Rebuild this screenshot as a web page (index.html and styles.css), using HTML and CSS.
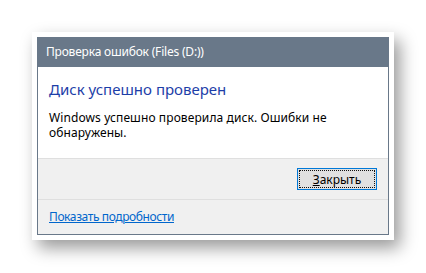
FILE: index.html
```html
<!DOCTYPE html>
<html lang="ru">

<head>
    <meta charset="UTF-8">
    <meta name="viewport" content="width=device-width, initial-scale=1.0">
    <title>Проверка ошибок</title>
    <link rel="stylesheet" href="styles.css">
</head>

<body>
    <div class="frame">
        <div class="dialog">
            <div class="title-bar">Проверка ошибок (Files (D:))</div>

            <div class="content">
                <h1>Диск успешно проверен</h1>
                <p>Windows успешно проверила диск. Ошибки не обнаружены.</p>
            </div>

            <div class="button-row">
                <button class="close-button"><span class="focus"><u>З</u>акрыть</span></button>
            </div>

            <div class="footer">
                <a href="#">Показать подробности</a>
            </div>
        </div>
    </div>
</body>

</html>
```

FILE: styles.css
```css
body {
    margin: 0;
    padding: 32px;
    background: white;
    font-family: 'Noto Sans', 'Open Sans', sans-serif;
    font-size: 12px;
}

.frame {
    width: 352px;
    padding: 5px;
    background: white;
    box-shadow: 6px 8px 16px rgba(0, 0, 0, 0.4);
}

.dialog {
    border: 1px solid #697889;
    border-top: none;
    background: #f0f0f0;
}

.title-bar {
    height: 30px;
    margin: 0 -1px;
    padding-left: 9px;
    background: #697889;
    color: white;
    line-height: 30px;
    font-size: 12px;
    letter-spacing: -0.2px;
}

.content {
    height: 91px;
    padding: 0 11px;
    background: white;
    border-bottom: 1px solid #dfdfdf;
}

h1 {
    margin: 0;
    padding-top: 11px;
    color: #1d3ea8;
    font-size: 15px;
    font-weight: normal;
    line-height: 22px;
}

p {
    margin: 10px 0 0;
    color: #000;
    line-height: 15px;
    letter-spacing: 0.1px;
}

.button-row {
    display: flex;
    justify-content: flex-end;
    padding: 9px 11px 9px;
    border-bottom: 1px solid #dfdfdf;
}

.close-button {
    width: 80px;
    height: 22px;
    padding: 1px;
    border: 1px solid #0078d7;
    background: #e1e1e1;
    font-family: inherit;
    font-size: 12px;
    color: #000;
}

.close-button .focus {
    display: block;
    height: 18px;
    line-height: 17px;
    border: 1px dotted #111;
    box-sizing: border-box;
}

.footer {
    height: 34px;
    padding-left: 11px;
    line-height: 34px;
}

.footer a {
    color: #0066cc;
    letter-spacing: -0.4px;
}
```
